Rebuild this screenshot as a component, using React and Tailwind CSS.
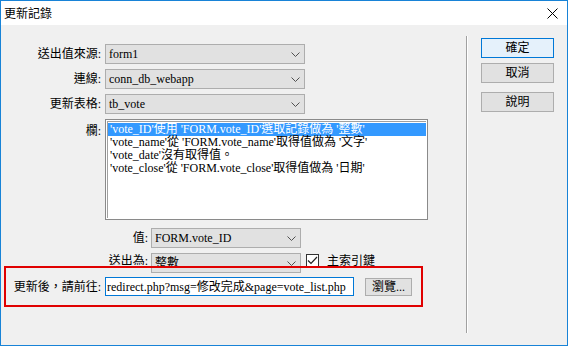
import { useState } from 'react';

const FONT = { fontFamily: '"Liberation Serif", "Noto Sans CJK TC", serif' };

const FIELD_ROWS = [
  "'vote_ID'使用 'FORM.vote_ID'選取記錄做為 '整數'",
  "'vote_name'從 'FORM.vote_name'取得值做為 '文字'",
  "'vote_date'沒有取得值。",
  "'vote_close'從 'FORM.vote_close'取得值做為 '日期'",
];

// ── Small pieces ─────────────────────────────────────────────
function Chevron() {
  return (
    <svg width="9" height="5" viewBox="0 0 9 5" className="shrink-0">
      <path d="M0.5 0.5 L4.5 4.5 L8.5 0.5" fill="none" stroke="#505050" strokeWidth="1" />
    </svg>
  );
}

function Select({ value, width }) {
  return (
    <div
      className={`flex items-center justify-between h-[20px] ${width} border border-[#adadad] bg-[#e1e1e1] pl-[3px] pr-[4px] text-[12px] leading-none text-black`}
    >
      <span className="whitespace-nowrap">{value}</span>
      <Chevron />
    </div>
  );
}

function Button({ children, primary }) {
  return (
    <button
      className={`h-[20px] w-[73px] border text-[12px] leading-none text-black ${
        primary ? 'border-[#0078d7] bg-[#e5f1fb]' : 'border-[#adadad] bg-[#e1e1e1]'
      }`}
    >
      {children}
    </button>
  );
}

export default function App() {
  const [selected, setSelected] = useState(0);

  return (
    <div
      className="flex flex-col w-[568px] h-[346px] border border-[#1883d7] bg-[#f0f0f0] overflow-hidden"
      style={FONT}
    >
      {/* Title bar */}
      <div className="flex items-center justify-between h-[24px] bg-white pl-[3px] pr-[9px] shrink-0">
        <span
          className="text-[12px] text-black"
          style={{ fontFamily: '"Noto Sans CJK TC", sans-serif' }}
        >
          更新記錄
        </span>
        <svg width="11" height="11" viewBox="0 0 11 11">
          <path d="M0.5 0.5 L10.5 10.5 M10.5 0.5 L0.5 10.5" stroke="#000" strokeWidth="1" />
        </svg>
      </div>

      <div className="flex flex-1">
        {/* Left: form */}
        <div className="flex flex-col w-[465px] pt-[19px]">
          <div className="flex items-center">
            <span className="w-[100px] text-right text-[12px]">送出值來源:</span>
            <div className="ml-[4px]"><Select value="form1" width="w-[200px]" /></div>
          </div>
          <div className="flex items-center mt-[5px]">
            <span className="w-[100px] text-right text-[12px]">連線:</span>
            <div className="ml-[4px]"><Select value="conn_db_webapp" width="w-[200px]" /></div>
          </div>
          <div className="flex items-center mt-[5px]">
            <span className="w-[100px] text-right text-[12px]">更新表格:</span>
            <div className="ml-[4px]"><Select value="tb_vote" width="w-[200px]" /></div>
          </div>

          {/* Field list */}
          <div className="flex items-start mt-[5px]">
            <span className="w-[100px] text-right text-[12px] pt-[3px]">欄:</span>
            <div className="ml-[4px] w-[323px] h-[101px] border border-[#8a8a8a] bg-white p-[1px]">
              <div className="border-t border-l border-[#a0a0a0] h-full pt-[1px]">
                {FIELD_ROWS.map((row, i) => (
                  <div
                    key={i}
                    onClick={() => setSelected(i)}
                    className={`h-[13px] pl-[2px] text-[12px] leading-[13px] whitespace-nowrap ${
                      selected === i ? 'bg-[#3399ff] text-white' : 'text-black'
                    }`}
                  >
                    {row}
                  </div>
                ))}
              </div>
            </div>
          </div>

          <div className="flex items-center mt-[8px]">
            <span className="w-[147px] text-right text-[12px]">值:</span>
            <div className="ml-[3px]"><Select value="FORM.vote_ID" width="w-[150px]" /></div>
          </div>

          {/* 送出為 row — partly covered by the redirect group */}
          <div className="flex items-start mt-[5px]">
            <div className="w-[147px] h-[12px] overflow-hidden text-right text-[12px] leading-[16px]">
              送出為:
            </div>
            <div className="ml-[3px]"><Select value="整數" width="w-[150px]" /></div>
            <div className="flex items-start ml-[5px] mt-[1px] h-[12px] overflow-hidden">
              <div className="w-[13px] h-[13px] border border-[#333] bg-white flex items-center justify-center">
                <svg width="11" height="9" viewBox="0 0 11 9">
                  <path d="M1 4.5 L4 7.5 L10 1" fill="none" stroke="#222" strokeWidth="1.2" />
                </svg>
              </div>
              <span className="ml-[8px] text-[12px] leading-[15px]">主索引鍵</span>
            </div>
          </div>

          {/* Redirect group (highlighted) */}
          <div className="flex items-center ml-[3px] mt-[-7px] w-[419px] h-[41px] border-2 border-[#e00000]">
            <span className="w-[95px] text-right text-[12px]">更新後，請前往:</span>
            <div className="ml-[4px] w-[249px] h-[19px] border border-[#0078d7] bg-white flex items-center pl-[1px] overflow-hidden">
              <span className="text-[12px] leading-none whitespace-nowrap">
                redirect.php?msg=修改完成&amp;page=vote_list.php
              </span>
            </div>
            <button className="ml-[11px] w-[47px] h-[18px] border border-[#adadad] bg-[#e1e1e1] text-[12px] leading-none">
              瀏覽...
            </button>
          </div>
        </div>

        {/* Divider */}
        <div className="flex mt-[11px] mb-[12px]">
          <div className="w-[1px] bg-[#a0a0a0]" />
          <div className="w-[1px] bg-white" />
        </div>

        {/* Right: buttons */}
        <div className="flex flex-col pt-[13px] pl-[13px] gap-[5px]">
          <Button primary>確定</Button>
          <Button>取消</Button>
          <div className="mt-[1px]"><Button>說明</Button></div>
        </div>
      </div>
    </div>
  );
}
